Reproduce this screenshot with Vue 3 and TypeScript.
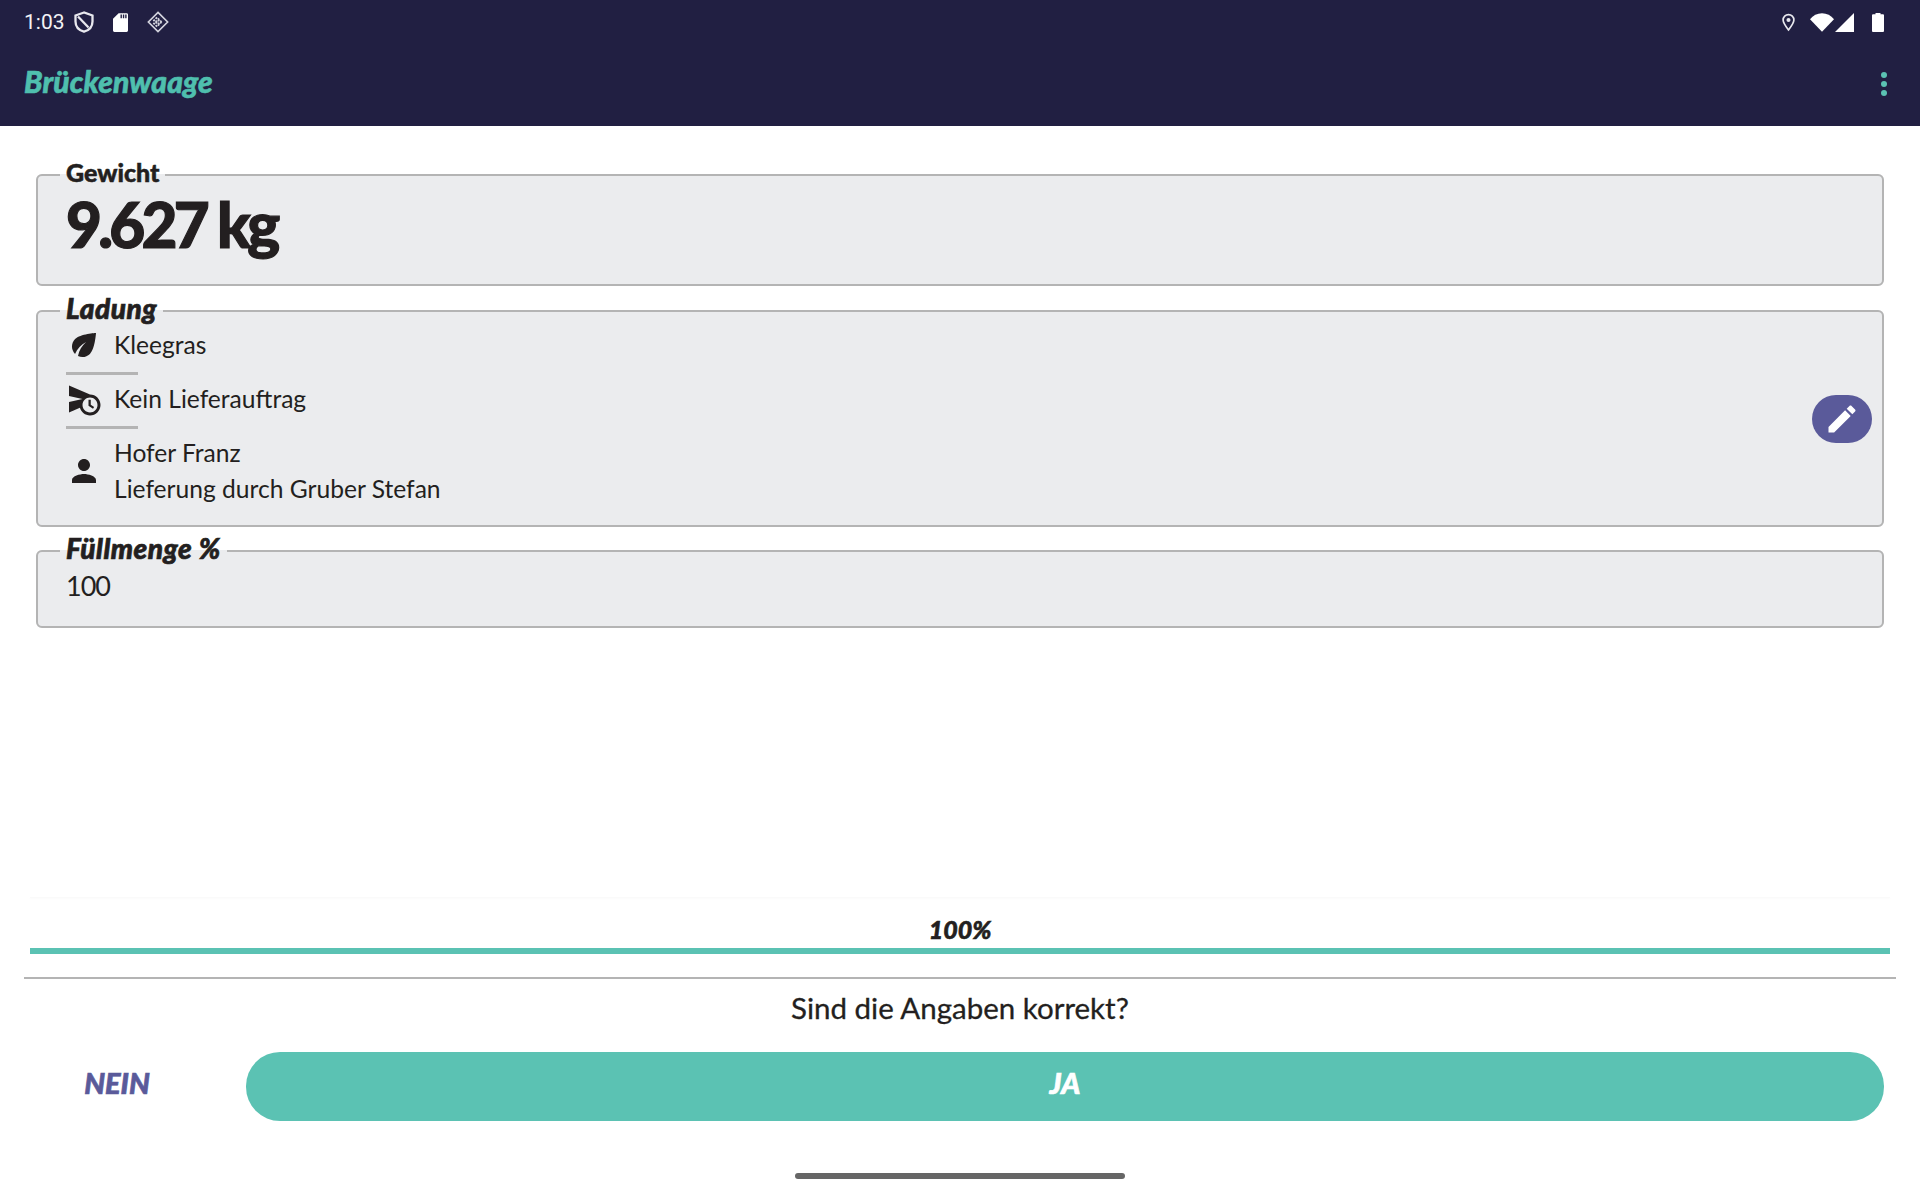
<script setup lang="ts">
const title: string = 'Brückenwaage'
</script>

<template>
  <div class="page">
    <header class="top">
      <div class="status">
        <span class="time">1:03</span>
        <svg class="s-shield" viewBox="2 1 20 22" fill="none" stroke="#e8e8ee" stroke-width="2.300"><path d="M12 2.500 3.500 5.500v6c0 5 3.600 8.800 8.500 10.200 4.900-1.400 8.500-5.200 8.500-10.200v-6z"/><path d="M6 6.500 16.500 17.500"/></svg>
        <svg class="s-sd" viewBox="0 0 16 20"><path fill="#fff" d="M6 0h8.500A1.500 1.500 0 0 1 16 1.500v17a1.500 1.500 0 0 1-1.500 1.500h-13A1.500 1.500 0 0 1 0 18.500V6zM8 1.500v4h1.500v-4zm2.500 0v4H12v-4zm2.500 0v4h1.500v-4z"/></svg>
        <svg class="s-grid" viewBox="0 0 24 24" fill="none" stroke="#d4d4de" stroke-width="1.800"><path d="M12 1.500 22.500 12 12 22.500 1.500 12z"/><path stroke-width="2.200" stroke-dasharray="2 1.500" d="M7 9.500 14.500 17M9.500 7 17 14.500M7 14.500 14.500 7M9.500 17 17 9.500"/></svg>
        <span class="grow"></span>
        <svg class="s-pin" viewBox="0 0 14 19" fill="none"><path stroke="#e8e8ee" stroke-width="1.800" d="M7 17.500C3.500 13 1.200 10 1.200 6.800a5.800 5.800 0 0 1 11.600 0C12.800 10 10.500 13 7 17.500z"/><circle cx="7" cy="6.800" r="2.200" fill="#e8e8ee"/></svg>
        <svg class="s-wifi" viewBox="0 0 24 19"><path fill="#fff" d="M0 6.200C3 2.500 7.200 0.300 12 0.300s9 2.200 12 5.900L12 18.800z"/></svg>
        <svg class="s-signal" viewBox="0 0 19 19"><path fill="#fff" d="M19 0v19H0z"/></svg>
        <svg class="s-batt" viewBox="0 0 12 19"><path fill="#fff" d="M3.500 0h5v1.300H11a1 1 0 0 1 1 1V18a1 1 0 0 1-1 1H1a1 1 0 0 1-1-1V2.300a1 1 0 0 1 1-1h2.500z"/></svg>
      </div>
      <div class="appbar">
        <span class="title">{{ title }}</span>
        <span class="kebab"><i></i><i></i><i></i></span>
      </div>
    </header>

    <main class="content">
      <fieldset class="card weight">
        <legend>Gewicht</legend>
        <div class="big">9.627 kg</div>
      </fieldset>

      <fieldset class="card load">
        <legend class="slant">Ladung</legend>
        <div class="row">
          <svg class="ic" viewBox="0 0 24 24"><path d="M6.050 8.050c-2.730 2.730-2.730 7.150-.02 9.880 1.470-3.400 4.090-6.240 7.360-7.930-2.770 2.340-4.710 5.610-5.390 9.320 2.600 1.230 5.800.78 7.950-1.370C19.430 14.470 20 4 20 4S9.530 4.570 6.050 8.050z"/></svg>
          <span>Kleegras</span>
        </div>
        <hr />
        <div class="row">
          <svg class="ic" viewBox="0 0 24 24"><path d="M16.500 12.500H15v4l3 2 .75-1.230-2.250-1.520V12.500zM16 9 2 3v7l9 2-9 2v7l7.270-3.110C10.090 20.830 12.790 23 16 23c3.860 0 7-3.140 7-7s-3.140-7-7-7zm0 12c-2.750 0-4.980-2.220-5-4.970v-.07C11.020 13.210 13.250 11 16 11c2.760 0 5 2.240 5 5s-2.240 5-5 5z"/></svg>
          <span>Kein Lieferauftrag</span>
        </div>
        <hr />
        <div class="row">
          <svg class="ic" viewBox="0 0 24 24"><path d="M12 12c2.210 0 4-1.790 4-4s-1.790-4-4-4-4 1.790-4 4 1.790 4 4 4zm0 2c-2.670 0-8 1.340-8 4v2h16v-2c0-2.660-5.330-4-8-4z"/></svg>
          <span class="stack"><span>Hofer Franz</span><span>Lieferung durch Gruber Stefan</span></span>
        </div>
        <button class="fab" aria-label="Bearbeiten">
          <svg viewBox="0 0 24 24"><path fill="#fff" d="M3 17.250V21h3.750L17.810 9.940l-3.750-3.750L3 17.250zM20.710 7.040c.39-.39.39-1.020 0-1.410l-2.340-2.340c-.39-.39-1.020-.39-1.410 0l-1.830 1.830 3.750 3.750 1.830-1.830z"/></svg>
        </button>
      </fieldset>

      <fieldset class="card fill">
        <legend class="slant">Füllmenge %</legend>
        <div class="val">100</div>
      </fieldset>
    </main>

    <section class="progress">
      <div class="ghost"></div>
      <div class="pct">100%</div>
      <div class="bar"></div>
    </section>
    <div class="rule"></div>
    <div class="question">Sind die Angaben korrekt?</div>
    <div class="actions">
      <button class="no">NEIN</button>
      <button class="yes">JA</button>
    </div>
    <div class="home"></div>
  </div>
</template>

<style>
html, body { margin: 0; background: #fff; }
</style>

<style scoped>
.page {
  width: 1920px;
  height: 1200px;
  display: flex;
  flex-direction: column;
  overflow: hidden;
  background: #fff;
  color: #231f20;
  font-family: Lato, "Noto Sans", sans-serif;
}
.top { height: 126px; background: #211f42; display: flex; flex-direction: column; flex: none; }
.status { height: 44px; display: flex; align-items: center; padding: 0 36px 0 24px; color: #fff; }
.time { font: 400 21px Roboto, sans-serif; color: #f2f2f5; width: 50px; }
.s-shield { width: 20px; height: 22px; }
.s-sd { width: 15px; height: 19px; margin-left: 19px; }
.s-grid { width: 22px; height: 22px; margin-left: 19px; }
.grow { flex: 1; }
.s-pin { width: 13px; height: 19px; margin-right: 15px; }
.s-wifi { width: 24px; height: 19px; margin-right: 1px; }
.s-signal { width: 19px; height: 19px; margin-right: 18px; }
.s-batt { width: 12px; height: 19px; }
.appbar { flex: 1; display: flex; align-items: center; justify-content: space-between; padding: 0 33px 9px 24px; }
.title { font-size: 30px; font-weight: 900; font-style: italic; color: #4fbfae; line-height: 36px; letter-spacing: 0.100px; -webkit-text-stroke: 0.6px #4fbfae; }
.kebab { display: flex; flex-direction: column; gap: 3px; margin-top: 7px; }
.kebab i { width: 6px; height: 6px; border-radius: 50%; background: #5bc2b3; }

.content { flex: 1; padding: 34px 36px 0; display: flex; flex-direction: column; gap: 9px; }
.card {
  box-sizing: border-box;
  flex: none;
  margin: 0;
  padding: 0 28px;
  min-width: 0;
  border: 2px solid #b4b4b4;
  border-radius: 6px;
  background: #ebecee;
  position: relative;
}
legend {
  margin-left: -6px;
  padding: 0 6px 6px;
  font-size: 25px;
  line-height: 24px;
  font-weight: 900;
  -webkit-text-stroke: 0.5px #231f20;
}
legend.slant { font-style: italic; font-size: 28px; padding-bottom: 5px; line-height: 25px; letter-spacing: 0.500px; -webkit-text-stroke: 0.7px #231f20; }
.weight { height: 126px; margin-bottom: 1px; }
.big { font-size: 62px; line-height: 62px; font-weight: 900; letter-spacing: -3.700px; margin-top: 3px; -webkit-text-stroke: 1.200px #231f20; }
.load { height: 231px; }
.load legend { margin-bottom: 1px; }
.row { display: flex; align-items: center; gap: 12px; font-size: 24.600px; line-height: 36px; }
.ic { width: 36px; height: 36px; fill: #231f20; flex: none; }
.stack { display: flex; flex-direction: column; }
hr { width: 72px; height: 3px; margin: 9px 0 6px; border: 0; background: #b4b4b4; }
.fab {
  position: absolute;
  right: 10px;
  top: 68px;
  width: 60px;
  height: 48px;
  padding: 0;
  border: 0;
  border-radius: 24px;
  background: #5a5a9a;
  display: flex;
  align-items: center;
  justify-content: center;
}
.fab svg { width: 36px; height: 36px; }
.fill { height: 92px; }
.val { font-size: 27px; line-height: 36px; margin-top: 2px; letter-spacing: -1px; }

.progress { flex: none; padding: 0 30px; }
.ghost { height: 1px; background: #fafafa; box-shadow: 0 1px 2px rgba(0,0,0,.03); }
.pct { text-align: center; font-size: 25px; line-height: 30px; font-weight: 900; font-style: italic; margin-top: 16px; -webkit-text-stroke: 0.6px #231f20; }
.bar { height: 6px; background: #5bc2b3; margin-top: 4px; }
.rule { flex: none; height: 2px; margin: 23px 24px 0; background: #b4b4b4; }
.question { flex: none; text-align: center; font-size: 29.500px; line-height: 36px; margin-top: 11px; -webkit-text-stroke: 0.3px #231f20; }
.actions { flex: none; display: flex; align-items: center; padding: 0 36px; margin-top: 26px; height: 69px; }
.actions button { font-family: inherit; font-style: italic; font-weight: 900; font-size: 29px; border: 0; padding: 0 0 8px; }
.no { width: 210px; height: 69px; padding-right: 48px !important; background: none; color: #5a5a9a; box-sizing: border-box; -webkit-text-stroke: 0.7px #5a5a9a; }
.yes { flex: 1; height: 69px; border-radius: 34px; background: #5bc2b3; color: #fff; -webkit-text-stroke: 0.7px #fff; }
.home { flex: none; width: 330px; height: 6px; border-radius: 3px; background: #666; margin: 52px auto 21px; }
</style>
